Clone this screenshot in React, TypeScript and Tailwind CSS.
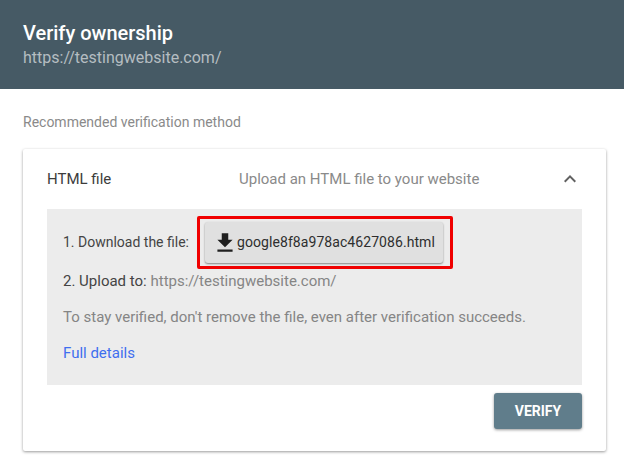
export default function App() {
  return (
    <div className="h-[473px] w-[624px] overflow-hidden bg-white font-['Roboto',sans-serif] text-[15px]">
      <header className="h-[89px] bg-[#465a65] pl-[23px] pt-[21px]">
        <h1 className="text-[20px] font-medium leading-[24px] text-white">Verify ownership</h1>
        <p className="mt-[2px] text-[16px] leading-[22px] text-[#b5bdc1]">https://testingwebsite.com/</p>
      </header>

      <main className="px-[23px]">
        <p className="pt-[24px] text-[14px] leading-[18px] text-[#8a8a8a]">Recommended verification method</p>

        <section className="mt-[18px] flex h-[302px] w-[583px] flex-col rounded-[2px] bg-white px-[24px] shadow-[0_1px_3px_rgba(0,0,0,0.4)]">
          <div className="flex h-[60px] shrink-0 items-center">
            <span className="w-[192px] text-[#3c3c3c]">HTML file</span>
            <span className="w-[319px] text-[#8a8a8a]">Upload an HTML file to your website</span>
            <svg viewBox="0 0 24 24" className="h-[24px] w-[24px] fill-[#616161]">
              <path d="M7.41 15.41 12 10.83l4.59 4.58L18 14l-6-6-6 6z" />
            </svg>
          </div>

          <div className="h-[176px] w-[535px] shrink-0 bg-[#ececec] pl-[16px]">
            <div className="flex items-center pt-[7px]">
              <span className="w-[134px] text-[14px] text-[#444]">1. Download the file:</span>
              <div className="rounded-[2px] border-[3px] border-[#f00000] p-[3px] pl-[5px] pr-[7px]">
                <button className="flex h-[41px] w-[238px] items-center rounded-[3px] bg-[#e0e0e0] pl-[7px] text-[14px] text-[#2e2e2e] shadow-[0_1px_2px_rgba(0,0,0,0.45)]">
                  <svg viewBox="0 0 24 24" className="mr-[-2px] h-[26px] w-[26px] shrink-0 fill-[#1f1f1f]">
                    <path d="M19 9h-4V3H9v6H5l7 7 7-7zM5 18v2h14v-2H5z" />
                  </svg>
                  <span className="pl-[1px] tracking-[0.07px]">google8f8a978ac4627086.html</span>
                </button>
              </div>
            </div>
            <p className="mt-[2px] leading-[20px] text-[#444]">
              2. Upload to: <span className="text-[#858585]">https://testingwebsite.com/</span>
            </p>
            <p className="mt-[16px] leading-[20px] text-[#858585]">To stay verified, don't remove the file, even after verification succeeds.</p>
            <a className="mt-[16px] block leading-[20px] text-[#3f6fef]">Full details</a>
          </div>

          <div className="flex justify-end pt-[8px]">
            <button className="h-[36px] w-[88px] rounded-[3px] bg-[#607d8b] text-[14px] font-bold text-white shadow-[0_1px_3px_rgba(0,0,0,0.4)]">
              VERIFY
            </button>
          </div>
        </section>
      </main>
    </div>
  );
}
